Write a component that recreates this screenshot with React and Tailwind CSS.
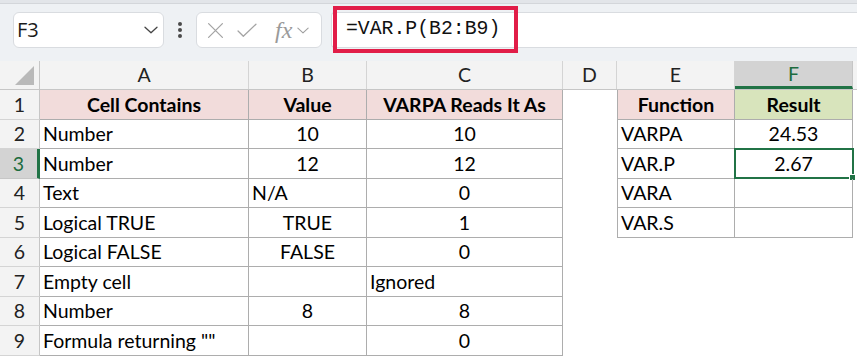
import React from "react";

const cols = [
  { key: "A", w: "w-[209px]" },
  { key: "B", w: "w-[118px]" },
  { key: "C", w: "w-[196px]" },
  { key: "D", w: "w-[54px]" },
  { key: "E", w: "w-[118px]" },
  { key: "F", w: "w-[118px]" },
];

// [A, B, C, E, F] ; align: l = left, c = center
const rows = [
  { n: 1, cells: [["Cell Contains", "h"], ["Value", "h"], ["VARPA Reads It As", "h"], ["Function", "h"], ["Result", "g"]] },
  { n: 2, cells: [["Number", "l"], ["10", "c"], ["10", "c"], ["VARPA", "l"], ["24.53", "c"]] },
  { n: 3, cells: [["Number", "l"], ["12", "c"], ["12", "c"], ["VAR.P", "l"], ["2.67", "c"]] },
  { n: 4, cells: [["Text", "l"], ["N/A", "l"], ["0", "c"], ["VARA", "l"], ["", "c"]] },
  { n: 5, cells: [["Logical TRUE", "l"], ["TRUE", "c"], ["1", "c"], ["VAR.S", "l"], ["", "c"]] },
  { n: 6, cells: [["Logical FALSE", "l"], ["FALSE", "c"], ["0", "c"]] },
  { n: 7, cells: [["Empty cell", "l"], ["", "c"], ["Ignored", "l"]] },
  { n: 8, cells: [["Number", "l"], ["8", "c"], ["8", "c"]] },
  { n: 9, cells: [["Formula returning \"\"", "l"], ["", "c"], ["0", "c"]] },
];

function Cell({ w, text, kind, table, extra = "" }) {
  let cls = `${w} h-full shrink-0 flex items-center overflow-visible whitespace-nowrap text-[19.5px] text-black `;
  if (table) cls += "border-r border-b border-[#adadad] ";
  if (kind === "h") cls += "bg-[#f2dcdb] font-bold justify-center ";
  else if (kind === "g") cls += "bg-[#d8e4bc] font-bold justify-center ";
  else if (kind === "c") cls += "justify-center ";
  else cls += "pl-[3px] ";
  return <div className={cls + extra}>{text}</div>;
}

function Chevron({ className }) {
  return (
    <svg className={className} viewBox="0 0 14 8" fill="none" stroke="currentColor" strokeWidth="1.3" strokeLinecap="round" strokeLinejoin="round">
      <path d="M1 1.2 L7 6.8 L13 1.2" />
    </svg>
  );
}

export default function App() {
  return (
    <div className="w-[857px] h-[357px] overflow-hidden bg-white" style={{ fontFamily: "Lato, 'Noto Sans', sans-serif" }}>
      {/* formula bar strip */}
      <div className="h-[61px] bg-[#eef1f4] relative">
        <div className="h-[4px] bg-[#e2e5e9] border-b border-[#d3d6da]" />
        <div className="flex items-center pt-[8px]">
          <div className="ml-[13px] w-[151px] h-[36px] bg-white rounded-[6px] border border-[#d9dce0] flex items-center justify-between pl-[3px] pr-[5px]">
            <span className="text-[20px] text-[#1a1a1a]" style={{ fontFamily: "'Open Sans', sans-serif" }}>F3</span>
            <Chevron className="w-[14px] h-[8px] text-[#444]" />
          </div>
          <div className="w-[32px] flex flex-col items-center gap-[2.5px]">
            <span className="w-[3.5px] h-[3.5px] bg-[#4a4a4a] rounded-full" />
            <span className="w-[3.5px] h-[3.5px] bg-[#4a4a4a] rounded-full" />
            <span className="w-[3.5px] h-[3.5px] bg-[#4a4a4a] rounded-full" />
          </div>
          <div className="w-[126px] h-[36px] bg-white rounded-[6px] border border-[#d9dce0] flex items-center pl-[10px] text-[#a4a4a4]">
            <svg className="w-[17px] h-[17px]" viewBox="0 0 16 16" fill="none" stroke="currentColor" strokeWidth="1.2" strokeLinecap="round">
              <path d="M1.5 1.5 L14.5 14.5 M14.5 1.5 L1.5 14.5" />
            </svg>
            <svg className="w-[20px] h-[15px] ml-[13px]" viewBox="0 0 19 14" fill="none" stroke="currentColor" strokeWidth="1.2" strokeLinecap="round" strokeLinejoin="round">
              <path d="M1 7.5 L6 12.5 L18 1" />
            </svg>
            <span className="ml-[18px] text-[24px] italic leading-none text-[#9a9a9a]" style={{ fontFamily: "'Liberation Serif', serif" }}>fx</span>
            <Chevron className="ml-[5px] w-[12px] h-[7px] text-[#a0a0a0]" />
          </div>
          <div className="ml-[9px] flex-1 h-[36px] bg-white border-l border-y border-[#d9dce0] rounded-l-[4px] flex items-center pl-[14px]">
            <span className="text-[19.8px] text-[#111]" style={{ fontFamily: "'Liberation Mono', monospace" }}>=VAR.P(B2:B9)</span>
          </div>
        </div>
        {/* highlight annotation */}
        <div className="absolute left-[333px] top-[6px] w-[185px] h-[47px] border-[4px] border-[#e11d48]" />
      </div>

      {/* column headers */}
      <div className="flex h-[29px] bg-[#f3f3f3] border-b border-[#c6c6c6]">
        <div className="w-[40px] shrink-0 relative border-r border-[#c6c6c6]">
          <svg className="absolute right-[5px] bottom-[4px] w-[19px] h-[19px]" viewBox="0 0 19 19">
            <polygon points="19,0 19,19 0,19" fill="#b9b9b9" />
          </svg>
        </div>
        {cols.map((c) => (
          <div
            key={c.key}
            className={
              c.key === "F"
                ? `${c.w} shrink-0 flex items-center justify-center text-[19.5px] bg-[#d3d3d3] text-[#1d6b3e] border-r border-[#c6c6c6] border-b-[3px] border-b-[#217346]`
                : `${c.w} shrink-0 flex items-center justify-center text-[19.5px] text-[#222] border-r border-[#d4d4d4]`
            }
          >
            {c.key}
          </div>
        ))}
        <div className="flex-1" />
      </div>

      {/* rows */}
      {rows.map((r) => {
        const sel = r.n === 3;
        const [a, b, c, e, f] = r.cells;
        return (
          <div key={r.n} className="flex h-[29.5px]">
            <div
              className={
                sel
                  ? "w-[40px] shrink-0 flex items-center justify-center text-[19.5px] bg-[#d3d3d3] text-[#1d6b3e] border-b border-[#c6c6c6] border-r-[3px] border-r-[#217346]"
                  : "w-[40px] shrink-0 flex items-center justify-center text-[19.5px] bg-[#f3f3f3] text-[#222] border-b border-[#d4d4d4] border-r border-r-[#c6c6c6]"
              }
            >
              {r.n}
            </div>
            <Cell w="w-[209px]" text={a[0]} kind={a[1]} table />
            <Cell w="w-[118px]" text={b[0]} kind={b[1]} table />
            <Cell w="w-[196px]" text={c[0]} kind={c[1]} table />
            <Cell w="w-[54px]" text="" kind="l" />
            {e ? (
              <>
                <Cell w="w-[118px]" text={e[0]} kind={e[1]} table extra="border-l" />
                <div className="relative">
                  <Cell w="w-[118px]" text={f[0]} kind={f[1]} table />
                  {sel && (
                    <>
                      <div className="absolute -left-[1px] -top-[1px] w-[120px] h-[31px] border-[2px] border-[#217346]" />
                      <div className="absolute left-[114px] top-[25px] w-[7px] h-[7px] bg-[#217346] border border-white" />
                    </>
                  )}
                </div>
              </>
            ) : null}
          </div>
        );
      })}
    </div>
  );
}
